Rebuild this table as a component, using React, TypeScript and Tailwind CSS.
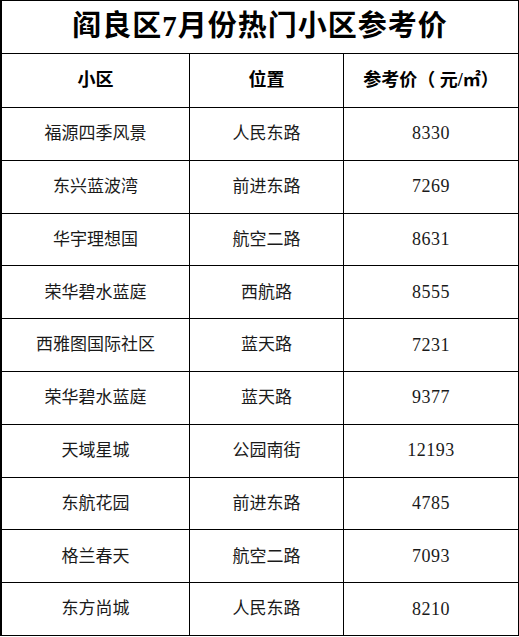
import React from "react";

const rows: [string, string, string][] = [
  ["福源四季风景", "人民东路", "8330"],
  ["东兴蓝波湾", "前进东路", "7269"],
  ["华宇理想国", "航空二路", "8631"],
  ["荣华碧水蓝庭", "西航路", "8555"],
  ["西雅图国际社区", "蓝天路", "7231"],
  ["荣华碧水蓝庭", "蓝天路", "9377"],
  ["天域星城", "公园南街", "12193"],
  ["东航花园", "前进东路", "4785"],
  ["格兰春天", "航空二路", "7093"],
  ["东方尚城", "人民东路", "8210"],
];

const font = { fontFamily: '"Liberation Serif", "Noto Sans CJK SC", serif' };

export default function App() {
  return (
    <div className="w-[519px] h-[637px] bg-white" style={font}>
      <div className="grid w-[519px] grid-cols-[188px_154px_175px] grid-rows-[53px_54px_repeat(10,52.8px)] border-t border-l-2 border-black text-[#1a1a1a]">
        <div className="col-span-3 flex items-center justify-center border-r border-b border-black text-[29px] font-bold tracking-[1px] text-black">
          阎良区7月份热门小区参考价
        </div>
        <div className="flex items-center justify-center border-r border-b border-black text-[18px] font-bold text-black">小区</div>
        <div className="flex items-center justify-center border-r border-b border-black text-[18px] font-bold text-black">位置</div>
        <div className="flex items-center justify-center border-r border-b border-black text-[18px] font-bold text-black">参考价（ 元/㎡）</div>
        {rows.map((r, i) => (
          <React.Fragment key={i}>
            <div className="flex items-center justify-center border-r border-b border-black text-[17px]">{r[0]}</div>
            <div className="flex items-center justify-center border-r border-b border-black text-[17px]">{r[1]}</div>
            <div className="flex items-center justify-center border-r border-b border-black text-[18px] tracking-[0.5px]">{r[2]}</div>
          </React.Fragment>
        ))}
      </div>
    </div>
  );
}
